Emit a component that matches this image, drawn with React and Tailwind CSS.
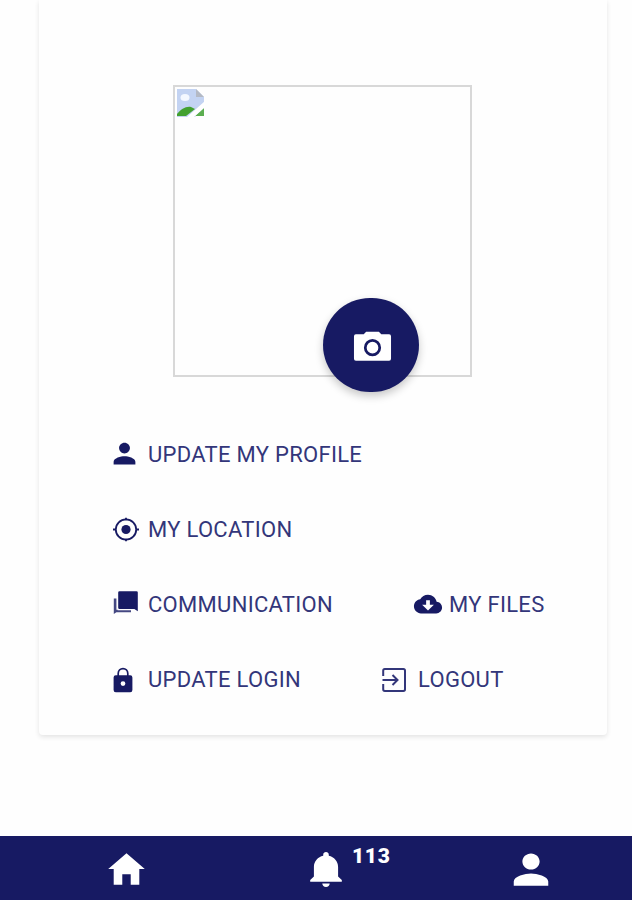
import { IoMdPerson, IoMdCloudDownload, IoMdHome, IoMdNotifications } from 'react-icons/io';

const LocateIcon = ({ className }) => (
    <svg className={className} viewBox="0 0 30 30" fill="none" stroke="currentColor">
        <circle cx="15" cy="15.5" r="10.2" strokeWidth="1.8" />
        <circle cx="15" cy="15.5" r="4.6" fill="currentColor" stroke="none" />
        <path d="M15 3.8v2.4M15 24.8v2.4M2 15.5h3M25 15.5h3" strokeWidth="1.8" />
    </svg>
);

const ChatIcon = ({ className }) => (
    <svg className={className} viewBox="0 0 30 30" fill="currentColor">
        <path d="M8.5 2.3h17a1.3 1.3 0 0 1 1.3 1.3v18.6l-3.4-2.2H8.5a1.3 1.3 0 0 1-1.3-1.3V3.6a1.3 1.3 0 0 1 1.3-1.3z" />
        <path d="M2.8 9.5h2.6v11.3h1.2v.4H20v2H5.4L2.8 25z" opacity="0.8" />
    </svg>
);

const LockIcon = ({ className }) => (
    <svg className={className} viewBox="0 0 30 30" fill="currentColor">
        <path d="M7.2 12V9.6c0-3 2.2-5 4.8-5s4.8 2 4.8 5V12" fill="none" stroke="currentColor" strokeWidth="1.7" />
        <path
            fillRule="evenodd"
            d="M4.8 11.3h14.4a2.2 2.2 0 0 1 2.2 2.2v12.6a2.2 2.2 0 0 1-2.2 2.2H4.8a2.2 2.2 0 0 1-2.2-2.2V13.5a2.2 2.2 0 0 1 2.2-2.2zM12 17.2a2.4 2.4 0 1 0 0 4.8 2.4 2.4 0 0 0 0-4.8z"
        />
    </svg>
);

const ExitIcon = ({ className }) => (
    <svg className={className} viewBox="0 0 30 30" fill="none" stroke="#33367a" strokeWidth="2">
        <path d="M4.2 12V6.7a1.6 1.6 0 0 1 1.6-1.6h18.6A1.6 1.6 0 0 1 26 6.7v18.6a1.6 1.6 0 0 1-1.6 1.6H5.8a1.6 1.6 0 0 1-1.6-1.6V20" />
        <path d="M3.5 16H18M13.5 11l5 5-5 5" />
    </svg>
);

const CameraIcon = ({ className }) => (
    <svg className={className} viewBox="0 0 40 34">
        <path
            d="M3 4h8l2.5-2.6h13L29 4h8a2 2 0 0 1 2 2v23a2 2 0 0 1-2 2H3a2 2 0 0 1-2-2V6a2 2 0 0 1 2-2z"
            fill="currentColor"
        />
        <circle cx="20" cy="17.7" r="7.4" fill="none" stroke="#171a63" strokeWidth="2.8" />
    </svg>
);

const MenuLink = ({ icon: Icon, label, iconClass = 'size-[30px]', gap = 'gap-[7px]', className = '' }) => (
    <button className={`flex h-[30px] items-center ${gap} ${className}`}>
        <span className="flex size-[30px] shrink-0 items-center justify-center">
            <Icon className={`shrink-0 ${iconClass}`} />
        </span>
        <span className="mt-[2px] text-[22px] leading-[30px] tracking-[0.3px] whitespace-nowrap text-[#33367a]">
            {label}
        </span>
    </button>
);

const BrokenImage = () => (
    <svg className="mt-px ml-px h-[30px] w-[30px]" viewBox="0 0 30 30">
        <path d="M1 1h19l8 8v11L19 29H1z" fill="#c3d3f2" />
        <path d="M20 1v8h8z" fill="#b4b9c4" />
        <ellipse cx="9" cy="9.5" rx="4.5" ry="3.5" fill="#f4f8ff" />
        <path d="M1 28v-2c4-5 9-8 14-7l4 2-9 7z" fill="#43a12f" />
        <path d="M19 28l9-8v8z" fill="#5cae50" />
        <path d="M11 29L29 13v6L18 29z" fill="#fff" />
    </svg>
);

const App = () => {
    return (
        <div className="flex h-[900px] w-[632px] flex-col overflow-hidden bg-[#fefefe] font-['Roboto',sans-serif] text-[#171a63]">
            <div className="mr-[25px] ml-[39px] h-[735px] rounded-b-[4px] bg-[#fefefe] shadow-[0_2px_5px_rgba(0,0,0,0.11)]">
                <div className="relative mt-[85px] ml-[134px] h-[292px] w-[299px] border-2 border-[#d8d8d8]">
                    <BrokenImage />
                    <button className="absolute top-[211px] left-[148px] flex h-[94px] w-[96px] items-center justify-center rounded-full bg-[#171a63] text-white shadow-[0_4px_8px_rgba(0,0,0,0.22)]">
                        <CameraIcon className="mt-[4px] ml-[2px] h-[34px] w-[39px]" />
                    </button>
                </div>

                <div className="mt-[62px] ml-[72px] flex flex-col gap-[45px]">
                    <MenuLink icon={IoMdPerson} label="UPDATE MY PROFILE" iconClass="mr-[3px] mb-[2px] size-[29px]" />
                    <MenuLink icon={LocateIcon} label="MY LOCATION" />
                    <div className="flex">
                        <MenuLink icon={ChatIcon} label="COMMUNICATION" className="w-[302px]" />
                        <MenuLink icon={IoMdCloudDownload} label="MY FILES" gap="gap-[6px]" />
                    </div>
                    <div className="flex">
                        <MenuLink icon={LockIcon} label="UPDATE LOGIN" className="w-[268px]" />
                        <MenuLink icon={ExitIcon} label="LOGOUT" gap="gap-[9px]" />
                    </div>
                </div>
            </div>

            <nav className="mt-auto flex h-[64px] items-center bg-[#171a63] text-white">
                <IoMdHome className="mt-[2px] ml-[104px] h-[42px] w-[45px]" preserveAspectRatio="none" />
                <div className="relative mt-[3px] ml-[154px]">
                    <IoMdNotifications className="h-[43px] w-[46px]" preserveAspectRatio="none" />
                    <span className="absolute top-[-3px] left-[49px] text-[21px] leading-[22px] font-black tracking-[0.7px]">
                        113
                    </span>
                </div>
                <IoMdPerson className="mt-[2px] ml-[159px] h-[43px] w-[46px]" preserveAspectRatio="none" />
            </nav>
        </div>
    );
};

export default App;
